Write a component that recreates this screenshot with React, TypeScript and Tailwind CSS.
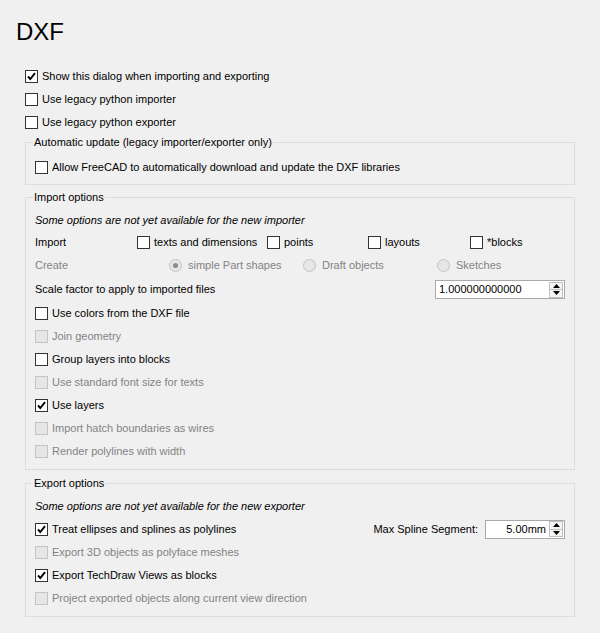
import clsx from 'clsx';
import { ReactNode } from 'react';

const Box = ({ checked, disabled }: { checked?: boolean; disabled?: boolean }) => (
  <span
    className={clsx(
      'flex h-[13px] w-[13px] shrink-0 items-center justify-center border',
      disabled ? 'border-[#c4c4c4] bg-[#e6e6e6]' : 'border-[#333333] bg-white'
    )}
  >
    {checked && (
      <svg width="11" height="11" viewBox="0 0 11 11">
        <path d="M2 5.5 L4.3 8 L9 2.2" fill="none" stroke="#000" strokeWidth="1.9" />
      </svg>
    )}
  </span>
);

const Radio = ({ checked }: { checked?: boolean }) => (
  <span className="flex h-[13px] w-[13px] shrink-0 items-center justify-center rounded-full border border-[#c4c4c4] bg-[#e6e6e6]">
    {checked && <span className="h-[5px] w-[5px] rounded-full bg-[#8a8a8a]" />}
  </span>
);

const CheckRow = ({
  label,
  checked,
  disabled,
  className,
}: {
  label: string;
  checked?: boolean;
  disabled?: boolean;
  className?: string;
}) => (
  <div className={clsx('flex h-[23px] items-center gap-[4px]', className)}>
    <Box checked={checked} disabled={disabled} />
    <span className={disabled ? 'text-[#838383]' : 'text-black'}>{label}</span>
  </div>
);

const SpinArrows = () => (
  <div className="mr-[1px] flex h-[16px] w-[14px] flex-col border border-[#c0c0c0] bg-[#f4f4f4]">
    <div className="flex flex-1 items-center justify-center border-b border-[#c0c0c0]">
      <svg width="7" height="4" viewBox="0 0 7 4">
        <path d="M0 4 L3.5 0 L7 4 Z" fill="#000" />
      </svg>
    </div>
    <div className="flex flex-1 items-center justify-center">
      <svg width="7" height="4" viewBox="0 0 7 4">
        <path d="M0 0 L3.5 4 L7 0 Z" fill="#000" />
      </svg>
    </div>
  </div>
);

const SpinBox = ({ value, width, right }: { value: string; width: string; right?: boolean }) => (
  <div className={clsx('flex h-[19px] items-center border border-[#a9a9a9] bg-white', width)}>
    <span className={clsx('flex-1 px-[3px]', right && 'text-right')}>{value}</span>
    <SpinArrows />
  </div>
);

const Group = ({ title, children, className }: { title: string; children: ReactNode; className?: string }) => (
  <fieldset className={clsx('border border-[#dcdcdc] px-[9px]', className)}>
    <legend className="-ml-[2px] px-[1px] leading-[14px]">{title}</legend>
    {children}
  </fieldset>
);

export default function App() {
  return (
    <div className="min-h-[633px] w-full bg-[#f0f0f0] font-['Liberation_Sans',Arial,sans-serif] text-[11px] text-black">
      <div className="pl-[16px] pt-[18px] text-[24px] leading-[28px]">DXF</div>

      <div className="mt-[19px] px-[25px]">
        <CheckRow label="Show this dialog when importing and exporting" checked />
        <CheckRow label="Use legacy python importer" />
        <CheckRow label="Use legacy python exporter" />

        <Group title="Automatic update (legacy importer/exporter only)" className="mt-[1px] pb-[5px] pt-[7px]">
          <CheckRow label="Allow FreeCAD to automatically download and update the DXF libraries" />
        </Group>

        <Group title="Import options" className="mt-[5px] pb-[6px] pt-[5px]">
          <div className="flex h-[22px] items-center italic">Some options are not yet available for the new importer</div>
          <div className="flex h-[23px] items-center">
            <span className="w-[102px]">Import</span>
            <CheckRow label="texts and dimensions" className="w-[130px]" />
            <CheckRow label="points" className="w-[101px]" />
            <CheckRow label="layouts" className="w-[102px]" />
            <CheckRow label="*blocks" />
          </div>
          <div className="flex h-[23px] items-center text-[#838383]">
            <span className="w-[134px]">Create</span>
            <div className="flex w-[134px] items-center gap-[6px]">
              <Radio checked />
              <span>simple Part shapes</span>
            </div>
            <div className="flex w-[134px] items-center gap-[6px]">
              <Radio />
              <span>Draft objects</span>
            </div>
            <div className="flex items-center gap-[6px]">
              <Radio />
              <span>Sketches</span>
            </div>
          </div>
          <div className="flex h-[25px] items-center justify-between">
            <span>Scale factor to apply to imported files</span>
            <SpinBox value="1.000000000000" width="w-[130px]" />
          </div>
          <CheckRow label="Use colors from the DXF file" />
          <CheckRow label="Join geometry" disabled />
          <CheckRow label="Group layers into blocks" />
          <CheckRow label="Use standard font size for texts" disabled />
          <CheckRow label="Use layers" checked />
          <CheckRow label="Import hatch boundaries as wires" disabled />
          <CheckRow label="Render polylines with width" disabled />
        </Group>

        <Group title="Export options" className="mt-[6px] pb-[6px] pt-[5px]">
          <div className="flex h-[22px] items-center italic">Some options are not yet available for the new exporter</div>
          <div className="flex h-[24px] items-center justify-between">
            <CheckRow label="Treat ellipses and splines as polylines" checked />
            <div className="flex items-center gap-[7px]">
              <span>Max Spline Segment:</span>
              <SpinBox value="5.00mm" width="w-[80px]" right />
            </div>
          </div>
          <CheckRow label="Export 3D objects as polyface meshes" disabled />
          <CheckRow label="Export TechDraw Views as blocks" checked />
          <CheckRow label="Project exported objects along current view direction" disabled />
        </Group>
      </div>
    </div>
  );
}
